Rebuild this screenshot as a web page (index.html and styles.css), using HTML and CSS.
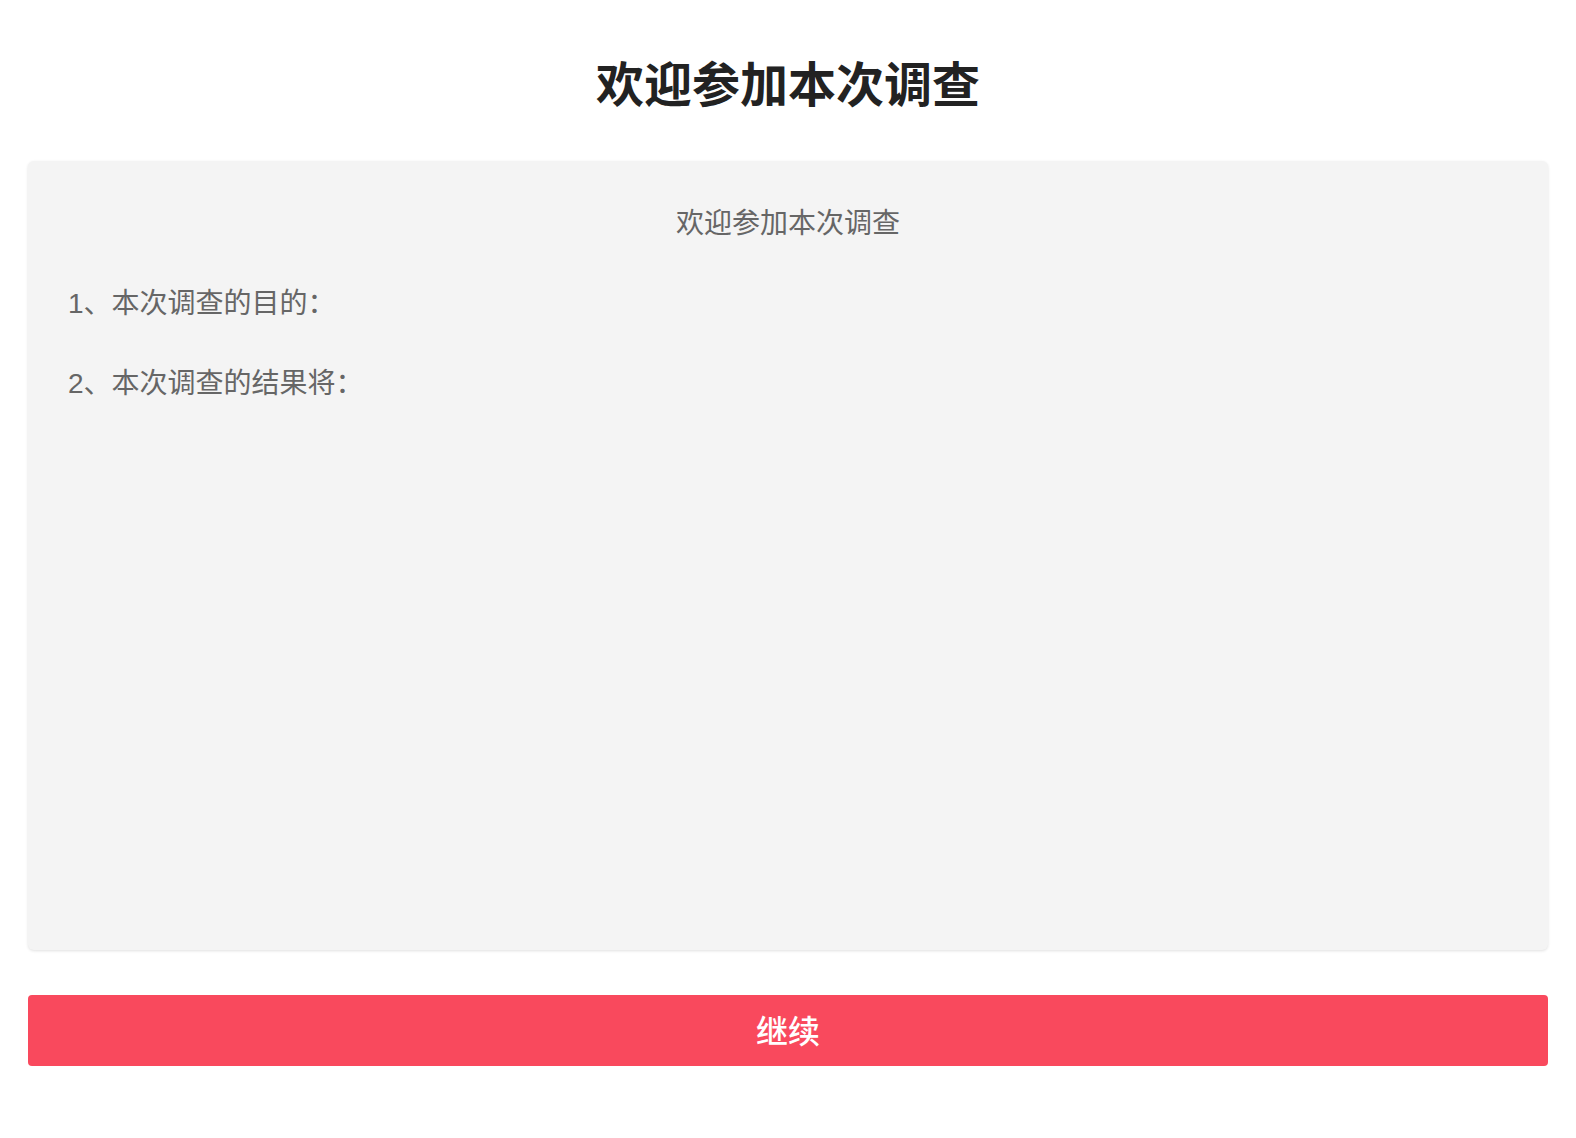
FILE: index.html
```html
<!DOCTYPE html>
<html lang="zh-CN">
<head>
<meta charset="utf-8">
<title>欢迎参加本次调查</title>
<link rel="stylesheet" href="styles.css">
</head>
<body>
<div class="page">
  <h1 class="title">欢迎参加本次调查</h1>
  <div class="card">
    <p class="card-heading">欢迎参加本次调查</p>
    <p class="card-line">1、本次调查的目的：</p>
    <p class="card-line">2、本次调查的结果将：</p>
  </div>
  <button class="continue">继续</button>
</div>
</body>
</html>
```
FILE: styles.css
```css
html, body {
  margin: 0;
  padding: 0;
  background: #ffffff;
}
body {
  font-family: "Liberation Sans", "Noto Sans CJK SC", sans-serif;
}
.page {
  padding: 52px 28px 0;
  display: flex;
  flex-direction: column;
}
.title {
  margin: 0 0 41px;
  font-size: 48px;
  line-height: 68px;
  font-weight: 700;
  color: #222222;
  text-align: center;
}
.card {
  box-sizing: border-box;
  height: 789px;
  background: #f4f4f4;
  border-radius: 6px;
  box-shadow: 0 1px 3px rgba(0, 0, 0, 0.12);
  padding: 43px 40px 0 40px;
}
.card-heading {
  margin: 0 0 40px;
  font-size: 28px;
  line-height: 40px;
  color: #666666;
  text-align: center;
}
.card-line {
  margin: 0 0 40px;
  font-size: 28px;
  line-height: 40px;
  color: #666666;
}
.continue {
  margin-top: 45px;
  height: 71px;
  border: none;
  border-radius: 4px;
  background: #f9495d;
  color: #ffffff;
  font-family: "Liberation Sans", "Noto Sans CJK SC", sans-serif;
  font-size: 32px;
  font-weight: 500;
  padding: 0 0 4px;
}
```
